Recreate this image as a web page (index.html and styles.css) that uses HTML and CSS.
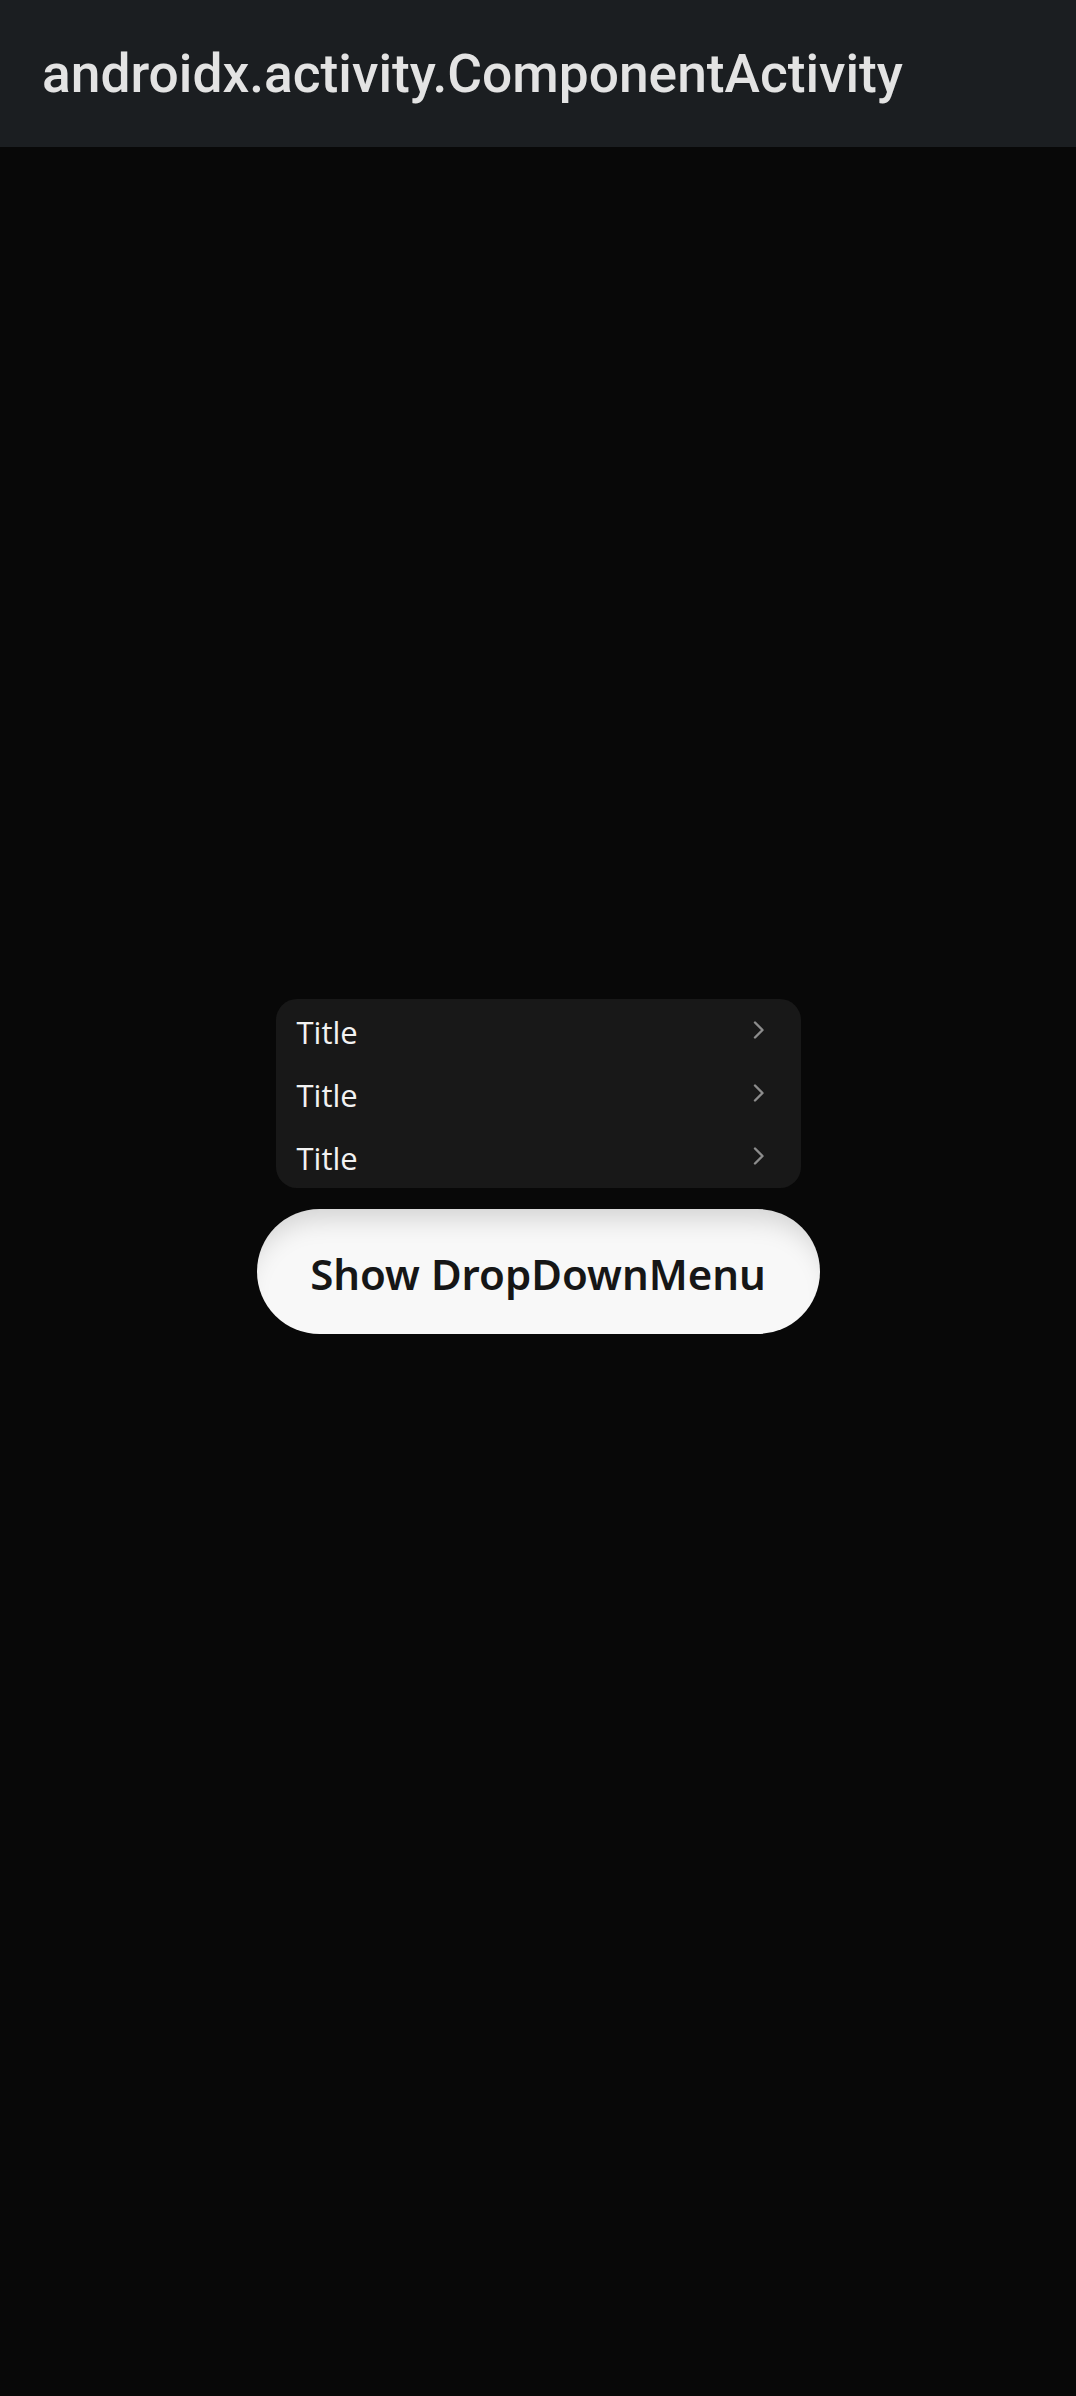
FILE: index.html
```html
<!DOCTYPE html>
<html>
<head>
<meta charset="utf-8">
<link rel="stylesheet" href="styles.css">
</head>
<body>
<header class="appbar"><span class="appbar-title">androidx.activity.ComponentActivity</span></header>
<main class="content">
  <div class="menu">
    <div class="menu-item"><span class="menu-label">Title</span><svg class="chev" width="12" height="18" viewBox="0 0 12 18"><path d="M2 1.5 L9.5 9 L2 16.5" fill="none" stroke="#8c8c8c" stroke-width="2.4" stroke-linecap="round" stroke-linejoin="round"/></svg></div>
    <div class="menu-item"><span class="menu-label">Title</span><svg class="chev" width="12" height="18" viewBox="0 0 12 18"><path d="M2 1.5 L9.5 9 L2 16.5" fill="none" stroke="#8c8c8c" stroke-width="2.4" stroke-linecap="round" stroke-linejoin="round"/></svg></div>
    <div class="menu-item"><span class="menu-label">Title</span><svg class="chev" width="12" height="18" viewBox="0 0 12 18"><path d="M2 1.5 L9.5 9 L2 16.5" fill="none" stroke="#8c8c8c" stroke-width="2.4" stroke-linecap="round" stroke-linejoin="round"/></svg></div>
  </div>
  <button class="show-btn">Show DropDownMenu</button>
</main>
</body>
</html>
```
FILE: styles.css
```css
html, body {
  margin: 0;
  padding: 0;
  background: #080808;
}
body {
  width: 1076px;
  height: 2396px;
  overflow: hidden;
}
.appbar {
  height: 147px;
  background: #1b1e21;
  display: flex;
  align-items: center;
  padding-left: 42px;
  box-sizing: border-box;
}
.appbar-title {
  font-family: Roboto, "Liberation Sans", sans-serif;
  font-weight: 500;
  font-size: 53.3px;
  color: #e3e3e3;
  line-height: 1;
  margin-top: 2px;
}
.content {
  display: flex;
  flex-direction: column;
  align-items: center;
  padding-top: 852px;
}
.menu {
  width: 525px;
  background: #181818;
  border-radius: 21px;
  display: flex;
  flex-direction: column;
}
.menu-item {
  height: 63px;
  display: flex;
  align-items: center;
  justify-content: space-between;
  padding: 0 36px 0 21px;
}
.menu-label {
  font-family: "Open Sans", "Noto Sans", sans-serif;
  font-size: 31px;
  color: #f2f2f2;
  line-height: 1;
  margin-top: 3px;
}
.chev {
  display: block;
  margin-top: -2px;
}
.show-btn {
  margin-top: 21px;
  width: 563px;
  height: 125px;
  border: none;
  border-radius: 63px;
  background: #f8f8f8;
  box-shadow: inset 0 24px 26px -14px rgba(0,0,0,0.15);
  font-family: "Noto Sans", "Open Sans", sans-serif;
  font-weight: 600;
  font-size: 42px;
  color: #161616;
  padding: 3px 0 0 0;
}
```
